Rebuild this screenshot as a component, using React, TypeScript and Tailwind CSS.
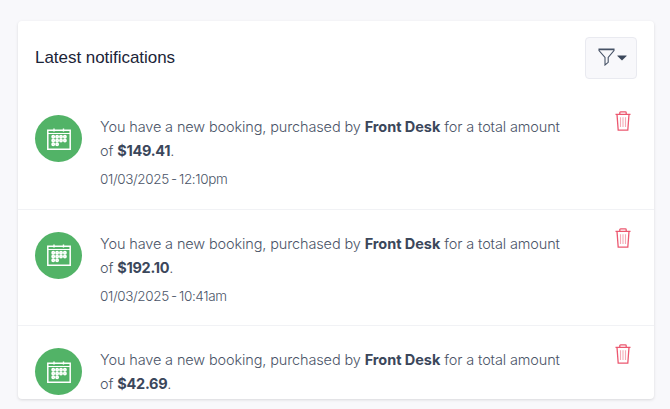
type Notification = { id: number; amount: string; date?: string; time?: string };

const notifications: Notification[] = [
  { id: 1, amount: '$149.41', date: '01/03/2025', time: '12:10pm' },
  { id: 2, amount: '$192.10', date: '01/03/2025', time: '10:41am' },
  { id: 3, amount: '$42.69' },
];

const dots = [
  [6.2, 9.8], [10.1, 9.8], [14, 9.8], [17.9, 9.8],
  [6.2, 13.5], [10.1, 13.5], [14, 13.5], [17.9, 13.5],
  [6.2, 17.2], [10.1, 17.2],
];

function CalendarIcon() {
  return (
    <svg width="24" height="24" viewBox="0 0 24 24" fill="none" stroke="white">
      <path d="M.8 3.3H23.2V22.3H.8z" strokeWidth="1.5" />
      <path d="M.8 6.5H23.2" strokeWidth="1.2" />
      <path d="M7 1.6V4.5M16.5 1.6V4.5" strokeWidth="1.4" />
      {dots.map(([x, y]) => (
        <circle key={`${x}-${y}`} cx={x} cy={y} r="1.1" strokeWidth="1.7" />
      ))}
    </svg>
  );
}

function TrashIcon() {
  return (
    <svg width="16" height="20" viewBox="0 0 16 20" fill="none" stroke="#ec5870">
      <path d="M.5 3.4H15.5M4.8 3V1.7Q4.8 .9 5.6 .9H10.4Q11.2 .9 11.2 1.7V3M2 3.4L3.2 19.2H12.8L14 3.4" strokeWidth="1.3" />
      <path d="M5.5 6.2V16M8 6.2V16M10.5 6.2V16" strokeWidth="1.1" opacity=".5" />
    </svg>
  );
}

function NotificationRow({ item }: { item: Notification }) {
  return (
    <li className="flex h-[116.5px] shrink-0 items-start border-b border-[#f1f2f5] pl-[17px] pr-[23px] pt-[22px]">
      <div className="flex h-[47px] w-[47px] shrink-0 items-center justify-center rounded-full bg-[#52b367]">
        <CalendarIcon />
      </div>
      <div className="ml-[18px] w-[465px] shrink-0 font-['Inter',sans-serif] font-light text-[#4b5568]">
        <p className="text-[14.5px] leading-6 tracking-[-0.13px]">
          <span className="whitespace-nowrap">
            You have a new booking, purchased by{' '}
            <strong className="font-bold tracking-[-0.04px] text-[#3b475b]">Front Desk</strong> for a total amount
          </span>
          <br />
          of <strong className="font-bold tracking-[-0.28px] text-[#3b475b]">{item.amount}</strong>.
        </p>
        {item.date && (
          <p className="mt-1.5 text-[13.5px] leading-5 tracking-[-0.37px] [word-spacing:-1.2px]">
            {item.date} - {item.time}
          </p>
        )}
      </div>
      <button className="ml-auto mt-[-4px]" aria-label="Delete notification">
        <TrashIcon />
      </button>
    </li>
  );
}

export default function App() {
  return (
    <main className="h-[409px] w-[670px] overflow-hidden bg-[#f8f8fb] pl-[18px] pt-[21px]">
      <section className="flex h-[378px] w-[636px] flex-col overflow-hidden rounded-[4px] bg-white shadow-[0_1px_3px_rgba(0,0,0,0.13)]">
        <header className="flex h-[72px] shrink-0 items-start justify-between pl-[17px] pr-[17px] pt-4">
          <h1 className="mt-[9px] font-['Liberation_Sans',Arial,sans-serif] text-[17px] leading-6 tracking-[-0.04px] text-[#1b2438]">
            Latest notifications
          </h1>
          <button className="flex h-[42px] w-[52px] items-center justify-center gap-[2px] rounded-[4px] border border-[#e9eaf0] bg-[#f8f8fb] pb-[3px] pl-[2px]" aria-label="Filter">
            <svg width="17" height="18" viewBox="0 0 17 18" fill="none" stroke="#465266" strokeWidth="1.1">
              <path d="M1 1H16V2.5L10.2 9.5V14.3L7 17V9.5L1 2.5zM1 1.6H16" />
            </svg>
            <svg className="mt-[3px]" width="10" height="6" viewBox="0 0 10 6" fill="#3b475b">
              <path d="M.4 .4H9.6V1L5 5.6L.4 1z" />
            </svg>
          </button>
        </header>
        <ul className="flex flex-col">
          {notifications.map((item) => (
            <NotificationRow key={item.id} item={item} />
          ))}
        </ul>
      </section>
    </main>
  );
}
